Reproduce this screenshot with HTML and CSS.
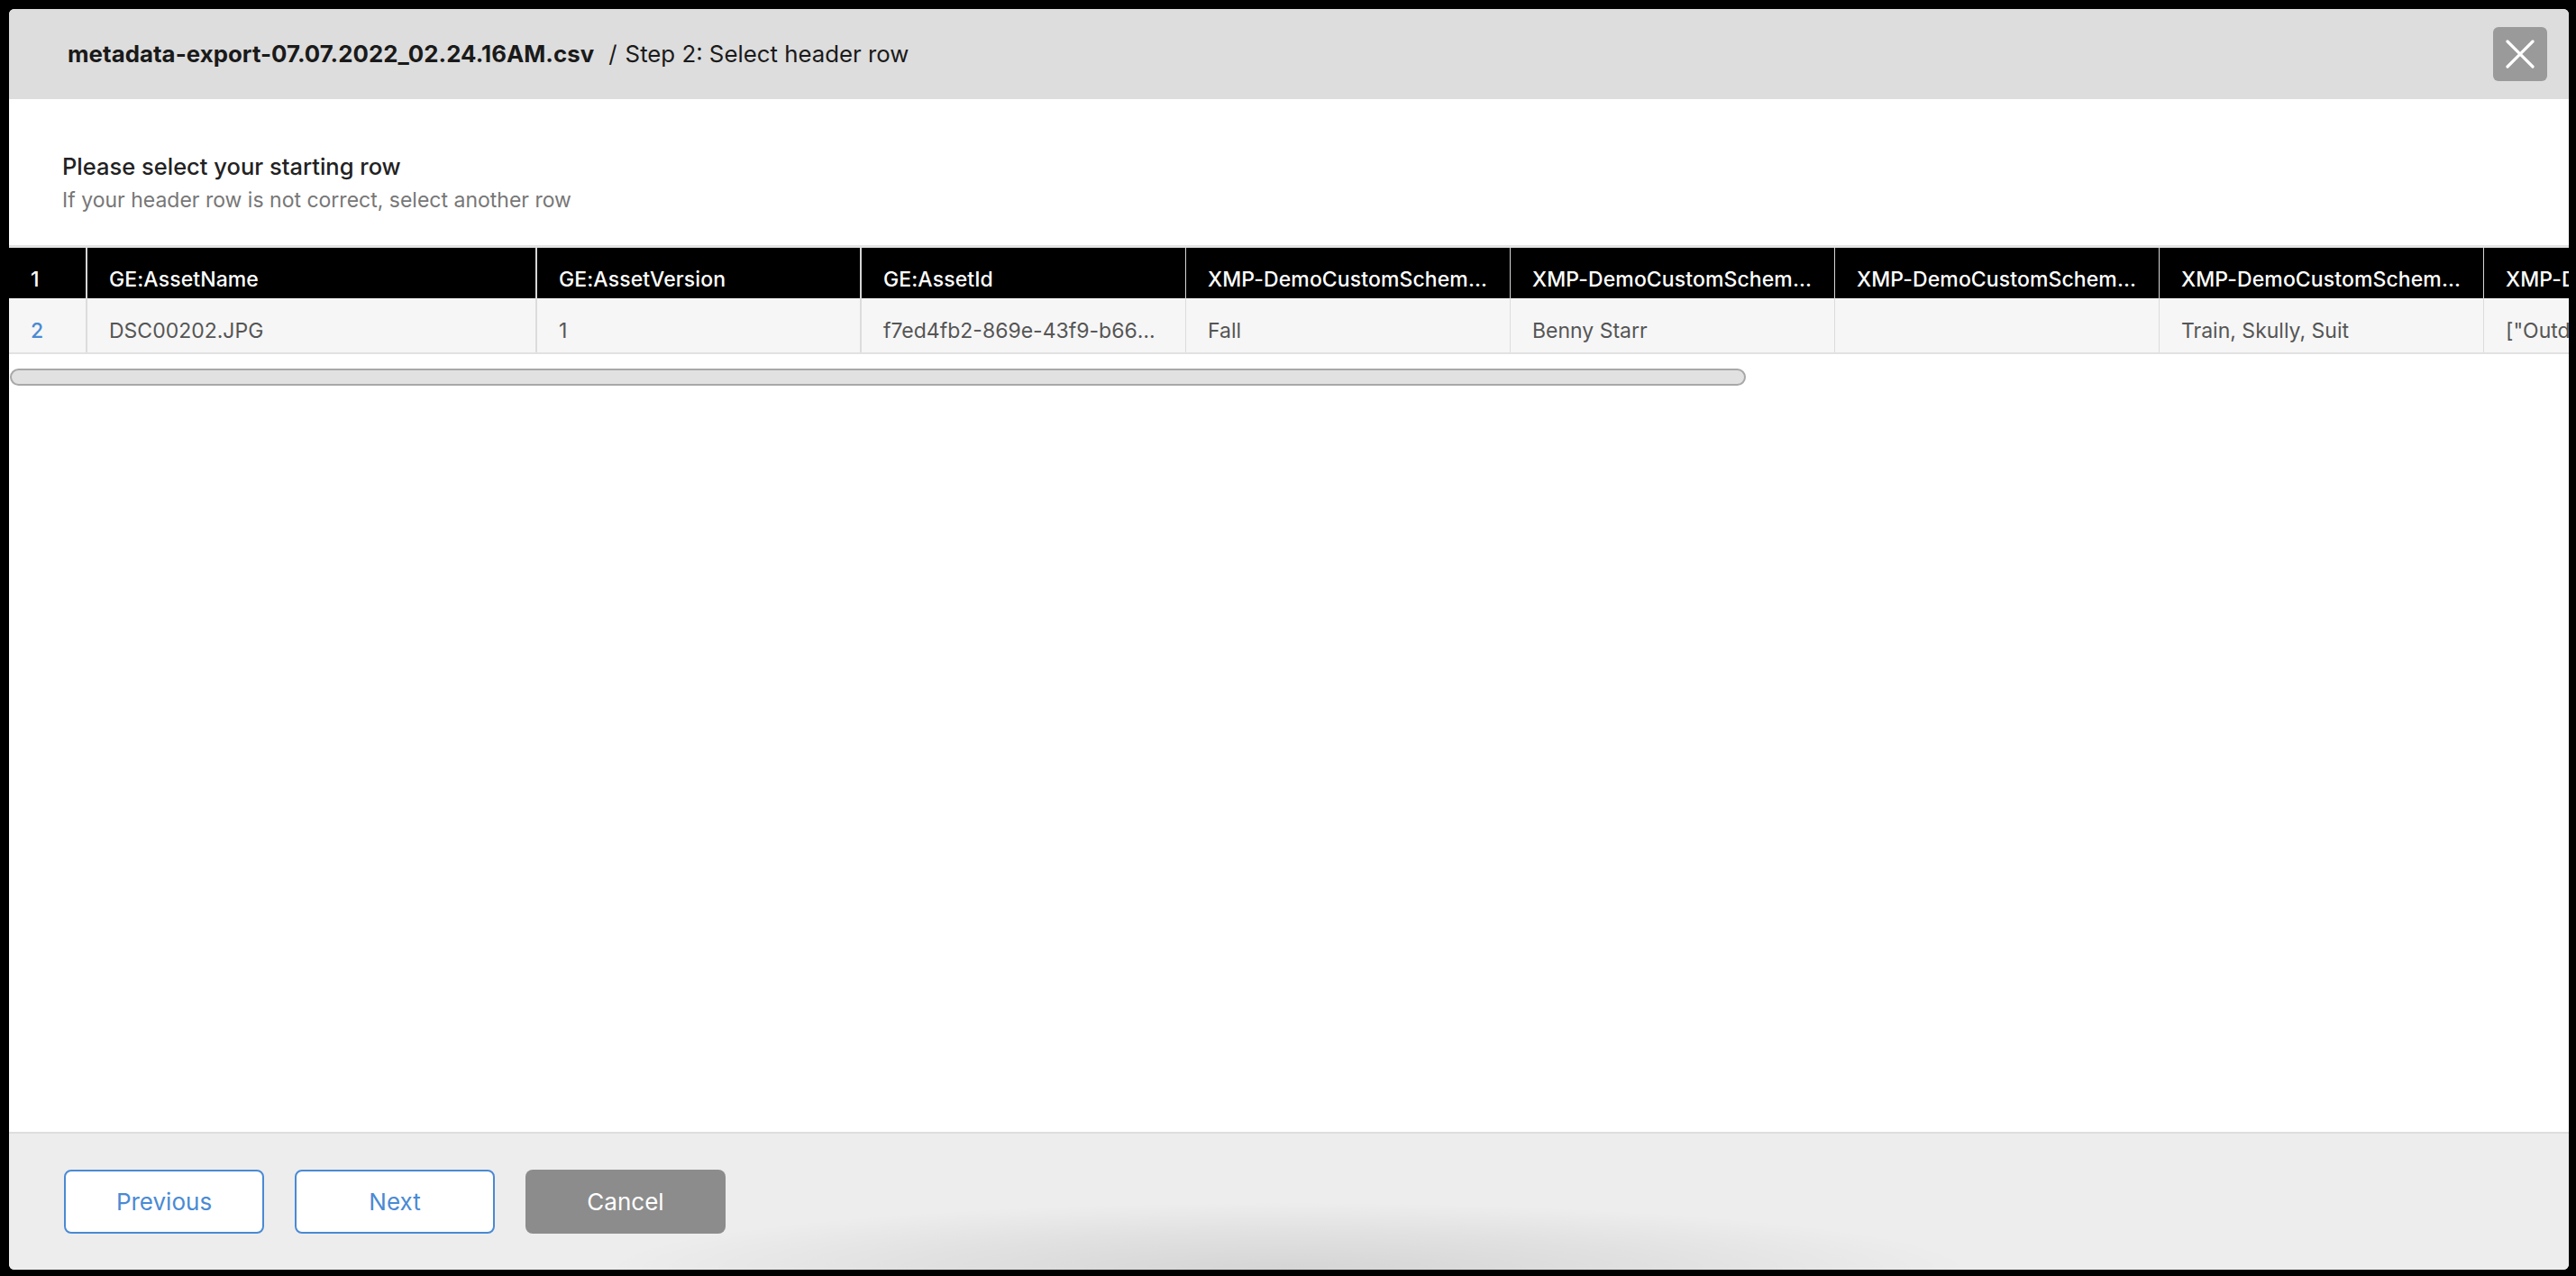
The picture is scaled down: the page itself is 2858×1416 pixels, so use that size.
FILE: index.html
```html
<!DOCTYPE html>
<html lang="en">
<head>
<meta charset="utf-8">
<title>Select header row</title>
<link rel="stylesheet" href="styles.css">
</head>
<body>
<div class="modal">
  <header class="modal-header">
    <h1 class="title"><span class="file">metadata-export-07.07.2022_02.24.16AM.csv</span><span class="sep">/</span><span class="step">Step 2: Select header row</span></h1>
    <button class="close" aria-label="Close">
      <svg viewBox="0 0 60 60" width="60" height="60"><path d="M16 16 L44 44 M44 16 L16 44" stroke="#fff" stroke-width="3.2" stroke-linecap="round" fill="none"/></svg>
    </button>
  </header>

  <main class="modal-body">
    <div class="intro">
      <p class="intro-title">Please select your starting row</p>
      <p class="intro-sub">If your header row is not correct, select another row</p>
    </div>

    <div class="table-wrap">
      <table class="grid">
        <colgroup>
          <col class="c-idx"><col class="c-name"><col class="c-std"><col class="c-std"><col class="c-std"><col class="c-std"><col class="c-std"><col class="c-std"><col class="c-std">
        </colgroup>
        <thead>
          <tr>
            <th class="idx pin">1</th>
            <th class="pin">GE:AssetName</th>
            <th class="pin">GE:AssetVersion</th>
            <th>GE:AssetId</th>
            <th>XMP-DemoCustomSchema:Season</th>
            <th>XMP-DemoCustomSchema:Model</th>
            <th>XMP-DemoCustomSchema:Photographer</th>
            <th>XMP-DemoCustomSchema:Props</th>
            <th>XMP-DemoCustomSchema:Tags</th>
          </tr>
        </thead>
        <tbody>
          <tr>
            <td class="idx pin"><span class="rownum">2</span></td>
            <td class="pin">DSC00202.JPG</td>
            <td class="pin">1</td>
            <td>f7ed4fb2-869e-43f9-b66e-4a1c3d2e9b10</td>
            <td>Fall</td>
            <td>Benny Starr</td>
            <td></td>
            <td>Train, Skully, Suit</td>
            <td>["Outdoor","Urban"]</td>
          </tr>
        </tbody>
      </table>
    </div>
    <div class="scroll-thumb"></div>
  </main>

  <footer class="modal-footer">
    <button class="btn btn-outline">Previous</button>
    <button class="btn btn-outline">Next</button>
    <button class="btn btn-muted">Cancel</button>
  </footer>
</div>
</body>
</html>
```

FILE: styles.css
```css
* { box-sizing: border-box; }

html, body {
  margin: 0;
  height: 100%;
}

body {
  background: #000;
  padding: 10px 8px 7px 10px;
  font-family: Inter, "Liberation Sans", Arial, sans-serif;
  overflow: hidden;
}

.modal {
  width: 2840px;
  height: 1399px;
  background: #fff;
  border-radius: 6px;
  overflow: hidden;
  display: flex;
  flex-direction: column;
}

/* Header */
.modal-header {
  height: 100px;
  flex: none;
  background: #dddddd;
  display: flex;
  align-items: center;
  justify-content: space-between;
  padding: 0 24px 0 65px;
}

.title {
  margin: 0;
  font-size: 25.8px;
  line-height: 40px;
  color: #1a1a1a;
  font-weight: 400;
  display: flex;
  align-items: baseline;
  white-space: nowrap;
}

.title .file {
  font-weight: 700;
  letter-spacing: 0.05px;
}

.title .sep {
  margin: 0 9px 0 16px;
}

.close {
  width: 60px;
  height: 60px;
  border: 0;
  padding: 0;
  border-radius: 6px;
  background: #9a9a9a;
  display: flex;
  align-items: center;
  justify-content: center;
  cursor: pointer;
}

.close svg { display: block; }

/* Body */
.modal-body {
  flex: 1;
  background: #fff;
  display: flex;
  flex-direction: column;
  min-height: 0;
}

.intro {
  padding: 60px 0 0 59px;
}

.intro-title {
  margin: 0;
  color: #222;
  font-size: 25.5px;
  font-weight: 450;
  line-height: 30px;
}

.intro-sub {
  margin: 6px 0 0;
  color: #777;
  font-size: 23px;
  line-height: 32px;
}

.table-wrap {
  margin-top: 34px;
  border-top: 3px solid #e4e4e4;
  border-bottom: 2px solid #e2e2e2;
  overflow: hidden;
}

.grid {
  table-layout: fixed;
  border-collapse: separate;
  border-spacing: 0;
  width: 3106px;
}

.c-idx { width: 87px; }
.c-name { width: 499px; }
.c-std { width: 360px; }

.grid th,
.grid td {
  text-align: left;
  white-space: nowrap;
  overflow: hidden;
  text-overflow: ellipsis;
  padding-left: 24px;
  padding-right: 24px;
  border-right: 1px solid #dcdcdc;
}

.grid th.pin,
.grid td.pin { border-right-width: 2px; }

.grid th {
  background: #000;
  color: #fff;
  font-size: 23px;
  font-weight: 500;
  letter-spacing: 0.1px;
  height: 56px;
  line-height: 42px;
  padding-top: 14px;
  padding-bottom: 0;
  border-right-color: #d6d6d6;
}

.grid td {
  background: #f6f6f6;
  color: #555;
  font-size: 23px;
  font-weight: 400;
  height: 60px;
  line-height: 48px;
  padding-top: 12px;
  padding-bottom: 0;
}

.grid .idx { padding-left: 24px; padding-right: 8px; }

.rownum {
  color: #4a8ad4;
  font-weight: 500;
}

.scroll-thumb {
  margin: 16px 0 0 1px;
  width: 1926px;
  height: 19px;
  border: 2px solid #a8a8a8;
  border-radius: 10px;
  background: #e1e1e1;
}

/* Footer */
.modal-footer {
  flex: none;
  height: 153px;
  border-top: 2px solid #dedede;
  background:
    radial-gradient(ellipse 760px 75px at 50% 100%, rgba(0,0,0,0.10), rgba(0,0,0,0.05) 55%, rgba(0,0,0,0) 100%),
    #ededed;
  display: flex;
  align-items: center;
  gap: 34px;
  padding-left: 61px;
}

.btn {
  width: 222px;
  height: 71px;
  border-radius: 8px;
  font-family: Inter, "Liberation Sans", Arial, sans-serif;
  font-size: 26px;
  cursor: pointer;
}

.btn-outline {
  background: #fff;
  color: #4a8ad4;
  border: 2px solid #4a8ad4;
}

.btn-muted {
  background: #8c8c8c;
  color: #fff;
  border: 0;
}
```
